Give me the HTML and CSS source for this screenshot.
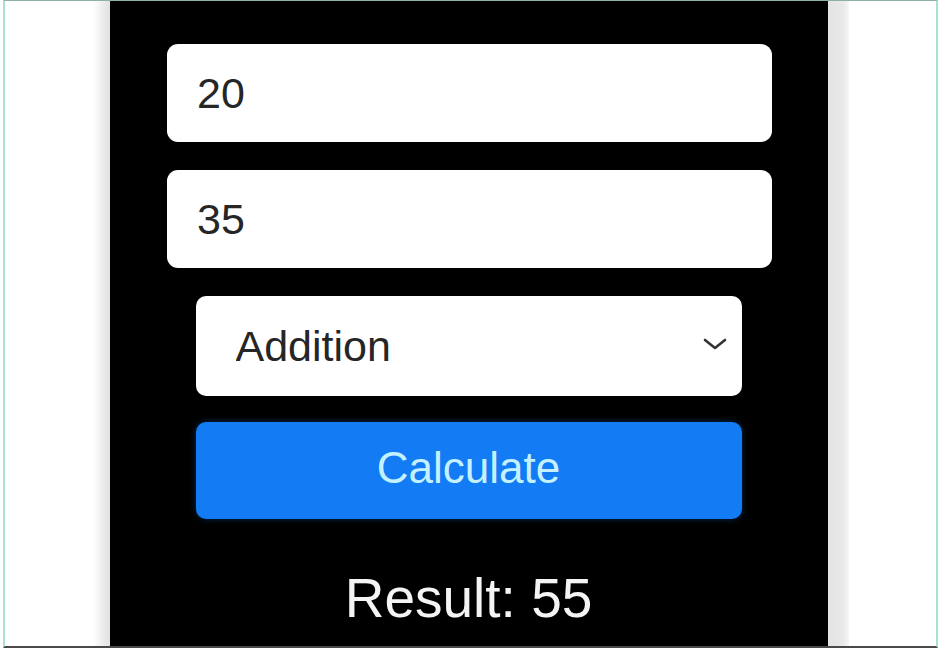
FILE: index.html
```html
<!DOCTYPE html>
<html lang="en">
<head>
<meta charset="utf-8">
<title>Calculator</title>
<link rel="stylesheet" href="styles.css">
</head>
<body>
<div class="frame">
  <div class="side"></div>
  <div class="shade shade-left"></div>
  <main class="panel">
    <input class="field" type="text" value="20">
    <input class="field" type="text" value="35">
    <div class="select-wrap">
      <select class="select">
        <option>Addition</option>
        <option>Subtraction</option>
        <option>Multiplication</option>
        <option>Division</option>
      </select>
      <svg class="chevron" width="24" height="12" viewBox="0 0 24 12" aria-hidden="true">
        <path d="M2 2 L12 10 L22 2" fill="none" stroke="#333" stroke-width="2.6" stroke-linecap="round" stroke-linejoin="round"/>
      </svg>
    </div>
    <button class="calc" type="button">Calculate</button>
    <p class="result">Result: 55</p>
  </main>
  <div class="shade shade-right"></div>
  <div class="side"></div>
</div>
</body>
</html>
```
FILE: styles.css
```css
html, body {
  margin: 0;
  padding: 0;
  background: #ffffff;
}
body {
  width: 938px;
  height: 648px;
  overflow: hidden;
  font-family: "Liberation Sans", Arial, sans-serif;
}
.frame {
  box-sizing: border-box;
  margin-left: 3px;
  width: 935px;
  height: 648px;
  display: flex;
  border-left: 2px solid #a9e3cc;
  border-right: 2px solid #a9e3cc;
  border-top: 1px solid #8fb0a4;
  border-bottom: 2px solid #4a4a4a;
  overflow: hidden;
}
.side {
  flex: 1;
  background: #ffffff;
}
.shade {
  flex: none;
}
.shade-left {
  width: 17px;
  background: linear-gradient(to right, #ffffff, #e6e6e6 80%, #e2e2e2);
}
.shade-right {
  width: 21px;
  background: linear-gradient(to right, #e4e4e4, #e9e9e9 70%, #f6f6f6);
}
.panel {
  flex: none;
  width: 718px;
  background: #000000;
  display: flex;
  flex-direction: column;
  align-items: center;
  padding-top: 43px;
  box-sizing: border-box;
}
.field {
  box-sizing: border-box;
  width: 605px;
  height: 98px;
  margin: 0 0 28px 2px;
  border: none;
  border-radius: 11px;
  background: #ffffff;
  padding: 0 0 0 30px;
  font-family: "Liberation Sans", Arial, sans-serif;
  font-size: 43px;
  color: #262626;
  outline: none;
}
.select-wrap {
  position: relative;
  width: 546px;
  height: 100px;
  margin-bottom: 26px;
}
.select {
  appearance: none;
  -webkit-appearance: none;
  box-sizing: border-box;
  width: 100%;
  height: 100%;
  border: none;
  border-radius: 10px;
  background: #ffffff;
  padding: 0 0 0 40px;
  font-family: "Liberation Sans", Arial, sans-serif;
  font-size: 43px;
  color: #262626;
  outline: none;
}
.chevron {
  position: absolute;
  right: 15px;
  top: 42px;
  pointer-events: none;
}
.calc {
  box-sizing: border-box;
  width: 546px;
  height: 97px;
  border: none;
  border-radius: 10px;
  background: #137bf4;
  color: #c4f1ff;
  font-family: "Liberation Sans", Arial, sans-serif;
  font-size: 44px;
  padding: 0 0 6px 0;
  box-shadow: 0 0 6px rgba(19, 123, 244, 0.35);
}
.result {
  margin: 52px 0 0 0;
  font-size: 55px;
  line-height: 1;
  color: #f4f4f4;
}
```
